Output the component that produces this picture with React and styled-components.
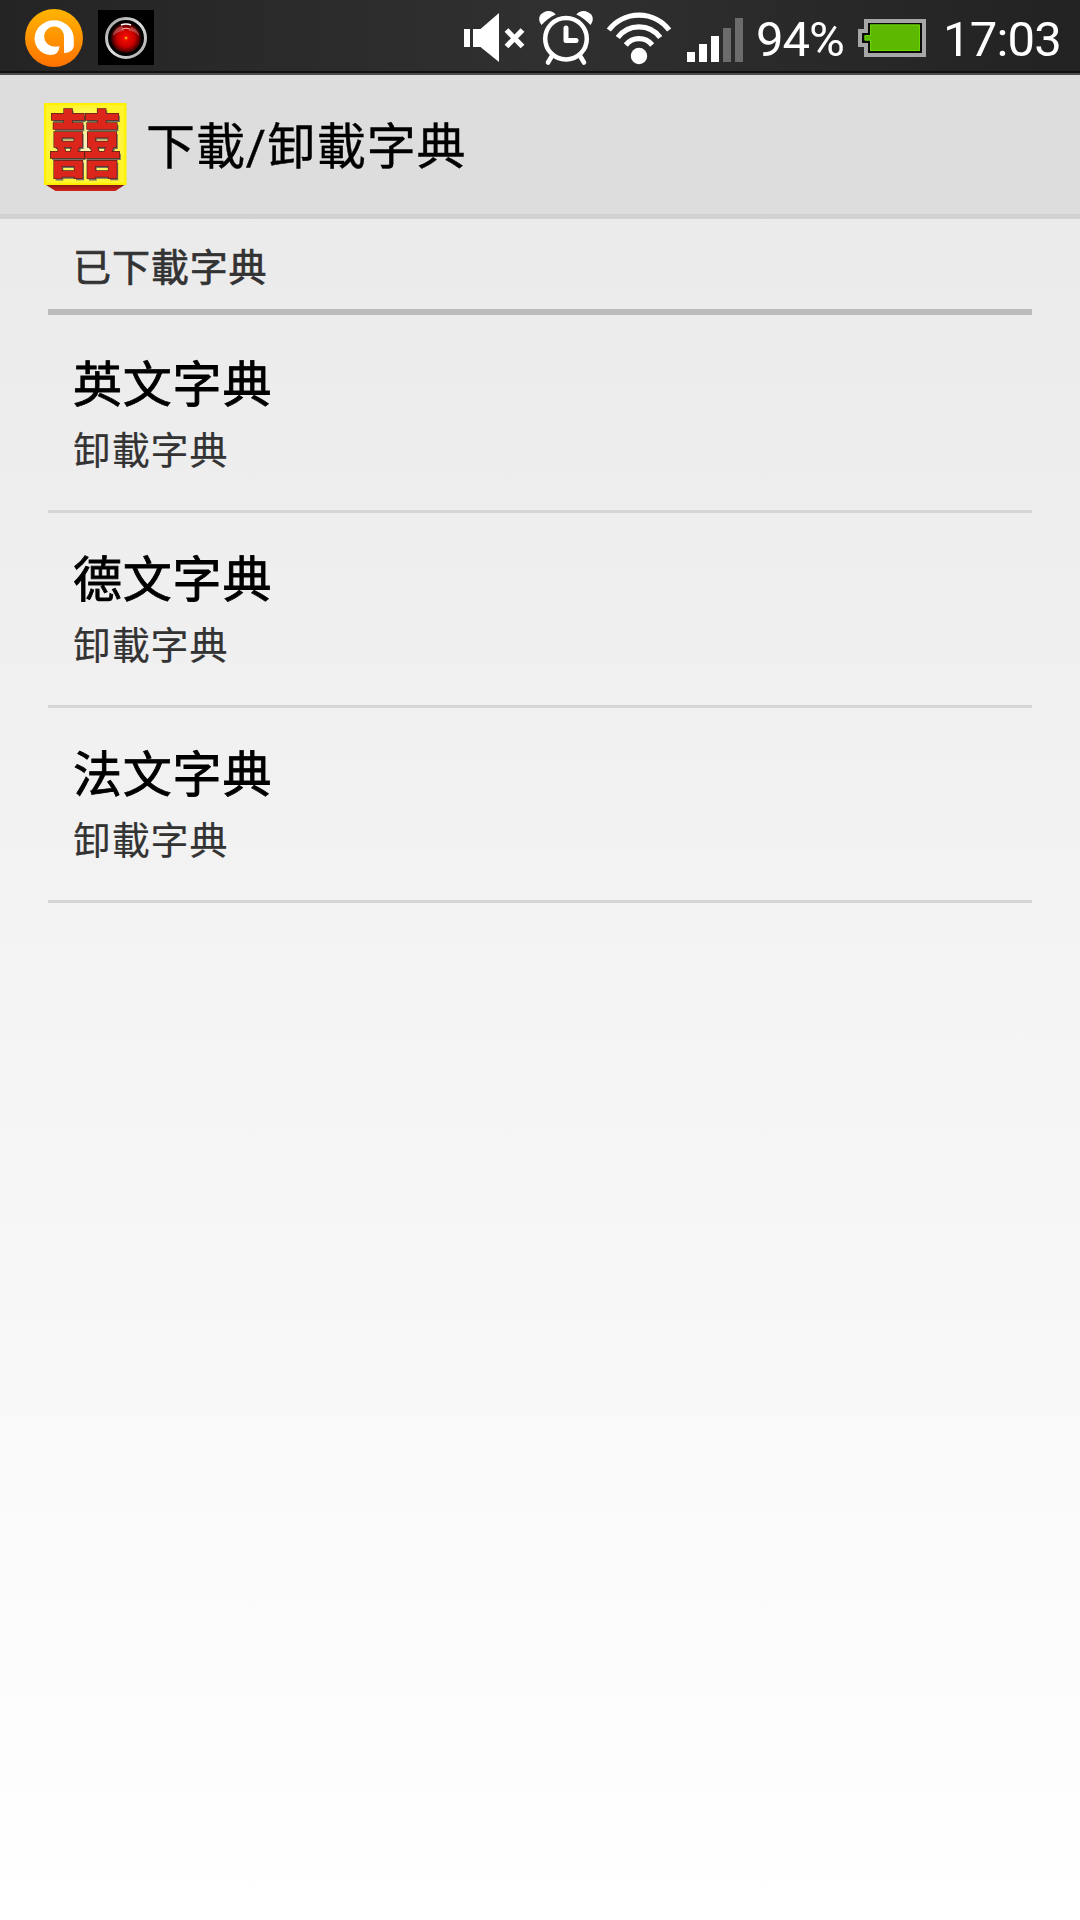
import styled, { createGlobalStyle } from "styled-components";

const GlobalStyle = createGlobalStyle`
*{
box-sizing:border-box;
}
body{
margin:0;
font-family:Roboto, "Noto Sans CJK TC", sans-serif;
}
svg{
display:block;
flex:none;
overflow:visible;
}
`;

const Screen = styled.div`
display:flex;
flex-direction:column;
height:1920px;
width:1080px;
overflow:hidden;
background:linear-gradient(#e8e8e8, #ffffff);
`;

const StatusBar = styled.header`
display:flex;
align-items:flex-start;
flex:none;
height:75px;
padding-left:25px;
border-bottom:2px solid #4b4b4b;
background:
linear-gradient(transparent 71px, #111111 71px),
linear-gradient(90deg, #242424, #303030 50%, #222222);
`;

const StatusSpacer = styled.div`
flex:none;
width:310px;
`;

const StatusText = styled.span`
flex:none;
width:${(props) => props.$width}px;
height:73px;
font-size:${(props) => props.$size}px;
line-height:79px;
letter-spacing:${(props) => props.$spacing || 0}px;
color:#ffffff;
white-space:nowrap;
`;

const ActionBar = styled.div`
display:flex;
align-items:flex-start;
flex:none;
height:144px;
padding:27px 0 0 44px;
border-bottom:5px solid #d2d2d2;
background:#dddddd;
`;

const Title = styled.h1`
margin:9px 0 0 19px;
font-size:49px;
letter-spacing:0.9px;
line-height:74px;
font-weight:400;
color:#000000;
-webkit-text-stroke:0.4px #000000;
`;

const List = styled.main`
padding:0 48px;
`;

const SectionHeader = styled.h2`
height:96px;
margin:0 0 3px;
padding:20px 0 0 25px;
border-bottom:6px solid #bcbcbc;
font-size:38px;
letter-spacing:0.9px;
line-height:58px;
font-weight:400;
color:#333333;
-webkit-text-stroke:0.7px #333333;
`;

const Row = styled.div`
height:195px;
padding:35px 0 0 25px;
border-bottom:3px solid #d6d6d6;
`;

const RowTitle = styled.div`
font-size:49px;
letter-spacing:0.8px;
line-height:66px;
color:#000000;
-webkit-text-stroke:0.8px #000000;
`;

const RowSummary = styled.div`
font-size:38px;
letter-spacing:0.8px;
line-height:64px;
color:#333333;
-webkit-text-stroke:0.2px #333333;
`;

const AvastIcon = () => (
  <svg width="73" height="73" viewBox="25 0 73 73">
    <defs>
      <linearGradient id="avast" x1="0" y1="0" x2="0" y2="1">
        <stop offset="0" stopColor="#ffb400" />
        <stop offset="1" stopColor="#ff7200" />
      </linearGradient>
    </defs>
    <circle cx="54" cy="38" r="29" fill="url(#avast)" />
    <path
      d="M64 53V38A10 10 0 1 0 54 46.500Q59 46.500 59.500 46Q59 55 50.500 55C41 54.500 34.500 47 34.500 38A19.700 19.200 0 0 1 73.800 38V46Q73 52.500 64 53Z"
      fill="#ffffff"
    />
  </svg>
);

const HalIcon = () => (
  <svg width="56" height="73" viewBox="98 0 56 73">
    <defs>
      <radialGradient id="eye">
        <stop offset="0" stopColor="#ff5a00" />
        <stop offset="0.15" stopColor="#f00c00" />
        <stop offset="0.6" stopColor="#c80000" />
        <stop offset="1" stopColor="#300000" />
      </radialGradient>
      <linearGradient id="ring" x1="0" y1="0" x2="1" y2="1">
        <stop offset="0" stopColor="#9c9c9c" />
        <stop offset="0.5" stopColor="#e0e0e0" />
        <stop offset="1" stopColor="#a8a8a8" />
      </linearGradient>
    </defs>
    <rect x="98" y="10" width="56" height="55" fill="#000000" />
    <circle cx="126" cy="38" r="19.500" fill="none" stroke="url(#ring)" strokeWidth="3" />
    <circle cx="126" cy="38" r="15" fill="url(#eye)" />
    <path d="M113 34Q116 27 122 26L124 31Q118 31 113 36ZM139 34Q136 28 131 27L129 31Q135 31 139 36Z" fill="#e7a5a0" opacity="0.4" />
    <path d="M121 25Q126 23 131 25" fill="none" stroke="#ffffff" strokeWidth="1.500" />
    <path d="M122 29Q126 27.500 130 29" fill="none" stroke="#e9b9b4" />
    <circle cx="126" cy="38" r="1.300" fill="#ffa000" />
  </svg>
);

const MuteIcon = () => (
  <svg width="75" height="73" viewBox="464 0 75 73" fill="#ffffff">
    <rect x="464" y="29" width="6" height="18" />
    <path d="M473 29H480.500L499 13V62L480.500 47H473Z" />
    <path d="M506.500 30L522.500 46.500M522.500 30L506.500 46.500" stroke="#ffffff" strokeWidth="5.300" />
  </svg>
);

const AlarmIcon = () => (
  <svg width="68" height="73" viewBox="539 0 68 73" fill="none" stroke="#ffffff">
    <circle cx="566" cy="38.700" r="20.800" strokeWidth="4.500" />
    <path d="M566 28V40.600H576" strokeWidth="5" strokeLinecap="round" strokeLinejoin="round" />
    <path d="M551.300 57L548 62.500M580.700 57L584 62.500" strokeWidth="4.600" strokeLinecap="round" />
    <path
      d="M541.500 25C537.500 20 539 14.500 543.500 12.500C548 10 553 11 555.700 14.500C550 17 546 20.500 541.500 25ZM590.500 25C594.500 20 593 14.500 588.500 12.500C584 10 579 11 576.300 14.500C582 17 586 20.500 590.500 25Z"
      fill="#ffffff"
      stroke="none"
    />
  </svg>
);

const WifiIcon = () => (
  <svg width="80" height="73" viewBox="607 0 80 73" fill="none" stroke="#ffffff" strokeWidth="5.200">
    <path d="M608.800 30A38 38 0 0 1 669.200 30" />
    <path d="M617.800 37.500A26.500 26.500 0 0 1 660.200 37.500" />
    <path d="M625.800 45A17 17 0 0 1 652.200 45" />
    <circle cx="639" cy="56" r="8.200" fill="#ffffff" stroke="none" />
  </svg>
);

const SignalIcon = () => (
  <svg width="69" height="73" viewBox="687 0 69 73" fill="#ffffff">
    <rect x="687" y="52" width="8" height="10" />
    <rect x="699" y="44" width="8" height="18" />
    <rect x="711" y="36" width="8" height="26" />
    <rect x="723" y="28" width="8" height="34" fill="#6c6c6c" />
    <rect x="735" y="18" width="8" height="44" fill="#6c6c6c" />
  </svg>
);

const BatteryIcon = () => (
  <svg width="85" height="73" viewBox="858 0 85 73">
    <path d="M864 19H926V57H864V47H858V29H864Z" fill="#a6a6a6" />
    <path d="M868 23H922V53H868V43H862V33H868Z" fill="#0a0a0a" />
    <path d="M870 24.500H920V51H870V40.500H864.500V35H870Z" fill="#5cb800" />
    <path d="M870.500 25H919.500V50.500H870.500V40H865V35.500H870.500Z" fill="none" stroke="#6bd600" />
  </svg>
);

const AppIcon = () => (
  <svg width="83" height="90" viewBox="44 102 83 90">
    <defs>
      <radialGradient id="tile">
        <stop offset="0" stopColor="#f5f0c0" />
        <stop offset="0.65" stopColor="#fbf574" />
        <stop offset="1" stopColor="#fff52a" />
      </radialGradient>
      <linearGradient id="base" x1="0" y1="0" x2="0" y2="1">
        <stop offset="0" stopColor="#7a1710" />
        <stop offset="1" stopColor="#d5221a" />
      </linearGradient>
    </defs>
    <path d="M44.500 184H126L115.500 191H55.500Z" fill="url(#base)" />
    <rect x="45" y="104" width="80.500" height="80" fill="url(#tile)" stroke="#fff000" strokeWidth="2" />
    <g fontFamily="Noto Sans CJK TC" fontSize="73" fontWeight="700" textAnchor="middle">
      <text x="86.500" y="172.500" fill="#777064">囍</text>
      <text x="85" y="171" fill="#dc261c" stroke="#55251d" strokeWidth="1.400" paintOrder="stroke">囍</text>
    </g>
  </svg>
);

const dictionaries = ["英文字典", "德文字典", "法文字典"];

const App = () => {
  return (
    <>
      <GlobalStyle />
      <Screen lang="zh-Hant">
        <StatusBar>
          <AvastIcon />
          <HalIcon />
          <StatusSpacer />
          <MuteIcon />
          <AlarmIcon />
          <WifiIcon />
          <SignalIcon />
          <StatusText $width={102} $size={49} $spacing={-1}>94%</StatusText>
          <BatteryIcon />
          <StatusText $width={130} $size={49} $spacing={-0.8}>17:03</StatusText>
        </StatusBar>
        <ActionBar>
          <AppIcon />
          <Title>下載/卸載字典</Title>
        </ActionBar>
        <List>
          <SectionHeader>已下載字典</SectionHeader>
          {dictionaries.map((name) => (
            <Row key={name}>
              <RowTitle>{name}</RowTitle>
              <RowSummary>卸載字典</RowSummary>
            </Row>
          ))}
        </List>
      </Screen>
    </>
  );
};

export default App;
